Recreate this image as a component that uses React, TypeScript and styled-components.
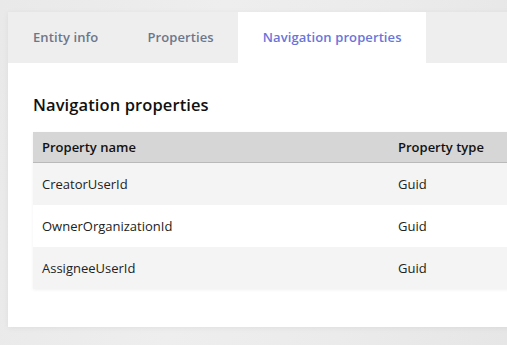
import styled, { createGlobalStyle } from 'styled-components'

const GlobalStyle = createGlobalStyle`
  html, body {
    margin: 0;
    padding: 0;
  }
  body {
    font-family: 'Open Sans', 'Liberation Sans', sans-serif;
    background: linear-gradient(100deg, #e9e9e9 0%, #eeeeee 40%, #ebebeb 70%, #e6e6e6 100%);
    min-height: 345px;
    overflow: hidden;
  }
`

const Page = styled.div`
  padding: 12px 0 0 8px;
  height: 345px;
  box-sizing: border-box;
`

const Card = styled.div`
  width: 520px;
  height: 315px;
  background: #ffffff;
  box-shadow: 0 1px 6px rgba(0, 0, 0, 0.06);
  display: flex;
  flex-direction: column;
`

const TabBar = styled.div`
  display: flex;
  height: 51px;
  background: #eeeeee;
`

const Tab = styled.div<{ $active?: boolean }>`
  display: flex;
  align-items: center;
  padding: 0 24px 2px 25px;
  font-size: 13px;
  font-weight: 600;
  letter-spacing: 0.1px;
  color: ${(p) => (p.$active ? '#6a75d8' : '#6d7689')};
  background: ${(p) => (p.$active ? '#ffffff' : 'transparent')};
`

const Body = styled.div`
  padding: 30px 0 0 25px;
`

const Heading = styled.h2`
  margin: 0 0 16px;
  font-size: 16.5px;
  font-weight: 600;
  color: #111111;
  letter-spacing: 0.1px;
`

const Table = styled.div`
  display: grid;
  grid-template-columns: 356px 1fr;
  box-shadow: 0 1px 3px rgba(0, 0, 0, 0.06);
`

const HeaderCell = styled.div`
  height: 30px;
  display: flex;
  align-items: center;
  padding-left: 9px;
  background: #d6d6d6;
  border-bottom: 1px solid #b9b9b9;
  font-size: 13px;
  font-weight: 600;
  color: #111111;
`

const Cell = styled.div<{ $striped?: boolean }>`
  height: 42px;
  display: flex;
  align-items: center;
  padding-left: 9px;
  background: ${(p) => (p.$striped ? '#f4f4f4' : '#ffffff')};
  font-size: 13px;
  color: #222222;
`

const rows = [
  { name: 'CreatorUserId', type: 'Guid' },
  { name: 'OwnerOrganizationId', type: 'Guid' },
  { name: 'AssigneeUserId', type: 'Guid' },
]

export default function App() {
  return (
    <>
      <GlobalStyle />
      <Page>
        <Card>
          <TabBar>
            <Tab>Entity info</Tab>
            <Tab>Properties</Tab>
            <Tab $active>Navigation properties</Tab>
          </TabBar>
          <Body>
            <Heading>Navigation properties</Heading>
            <Table>
              <HeaderCell>Property name</HeaderCell>
              <HeaderCell>Property type</HeaderCell>
              {rows.map((r, i) => [
                <Cell key={r.name} $striped={i % 2 === 0}>{r.name}</Cell>,
                <Cell key={r.name + '-t'} $striped={i % 2 === 0}>{r.type}</Cell>,
              ])}
            </Table>
          </Body>
        </Card>
      </Page>
    </>
  )
}
